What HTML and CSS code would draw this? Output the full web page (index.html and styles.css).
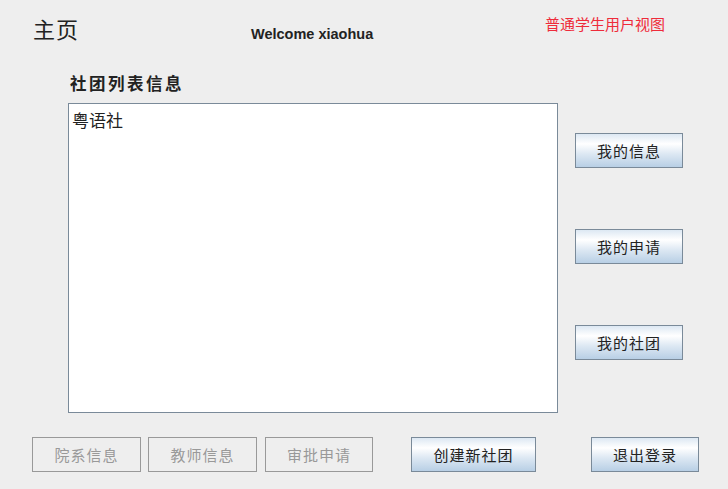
FILE: index.html
```html
<!DOCTYPE html>
<html lang="zh">
<head>
<meta charset="utf-8">
<title>主页</title>
<link rel="stylesheet" href="styles.css">
</head>
<body>
<div class="window">
  <div class="header">
    <div class="title">主页</div>
    <div class="welcome">Welcome xiaohua</div>
    <div class="role">普通学生用户视图</div>
  </div>
  <div class="list-label">社团列表信息</div>
  <div class="main">
    <div class="listbox">
      <div class="list-item">粤语社</div>
    </div>
    <div class="side">
      <button class="btn side-btn first">我的信息</button>
      <button class="btn side-btn">我的申请</button>
      <button class="btn side-btn">我的社团</button>
    </div>
  </div>
  <div class="bottom">
    <button class="btn disabled b1" disabled>院系信息</button>
    <button class="btn disabled b2" disabled>教师信息</button>
    <button class="btn disabled b3" disabled>审批申请</button>
    <button class="btn b4">创建新社团</button>
    <button class="btn b5">退出登录</button>
  </div>
</div>
</body>
</html>
```

FILE: styles.css
```css
html, body {
  margin: 0;
  padding: 0;
  background: #eeeeee;
}
body {
  font-family: "Noto Sans CJK SC", "Noto Sans", sans-serif;
  color: #333333;
}
.window {
  width: 728px;
  height: 489px;
  overflow: hidden;
}
.header {
  display: flex;
  align-items: flex-start;
  height: 73px;
  padding-top: 15px;
  padding-left: 33px;
  box-sizing: border-box;
}
.title {
  font-size: 22px;
  line-height: 26px;
  letter-spacing: 1px;
  width: 218px;
  color: #222;
}
.welcome {
  font-family: "Liberation Sans", Arial, sans-serif;
  font-weight: bold;
  font-size: 14.5px;
  line-height: 17px;
  margin-top: 11px;
  width: 294px;
  color: #222;
}
.role {
  font-size: 15px;
  line-height: 18px;
  color: #ee2b3a;
  margin-top: 0;
}
.list-label {
  margin-left: 70px;
  height: 30px;
  font-size: 16.5px;
  line-height: 20px;
  font-weight: bold;
  letter-spacing: 2.5px;
  color: #222;
}
.main {
  display: flex;
  margin-left: 68px;
  height: 310px;
}
.listbox {
  width: 490px;
  height: 310px;
  box-sizing: border-box;
  background: #ffffff;
  border: 1px solid #7a8a99;
}
.list-item {
  font-size: 17px;
  line-height: 20px;
  padding: 6px 0 0 3px;
  color: #222;
}
.side {
  display: flex;
  flex-direction: column;
  margin-left: 17px;
}
.btn {
  box-sizing: border-box;
  height: 35px;
  width: 108px;
  padding: 0;
  border: 1px solid #7a8a99;
  background: linear-gradient(#dde8f3 0%, #ffffff 30%, #dde8f3 60%, #b8cfe5 100%);
  font-family: "Noto Sans CJK SC", "Noto Sans", sans-serif;
  font-size: 15px;
  letter-spacing: 1px;
  color: #222222;
  text-align: center;
}
.side-btn {
  margin-top: 61px;
}
.side-btn.first {
  margin-top: 30px;
}
.bottom {
  display: flex;
  margin-top: 24px;
  padding-left: 32px;
}
.btn.disabled {
  background: #eeeeee;
  border-color: #999999;
  color: #999999;
}
.b1 { width: 109px; }
.b2 { width: 109px; margin-left: 7px; }
.b3 { margin-left: 8px; }
.b4 { width: 125px; margin-left: 38px; }
.b5 { margin-left: 55px; }
```
